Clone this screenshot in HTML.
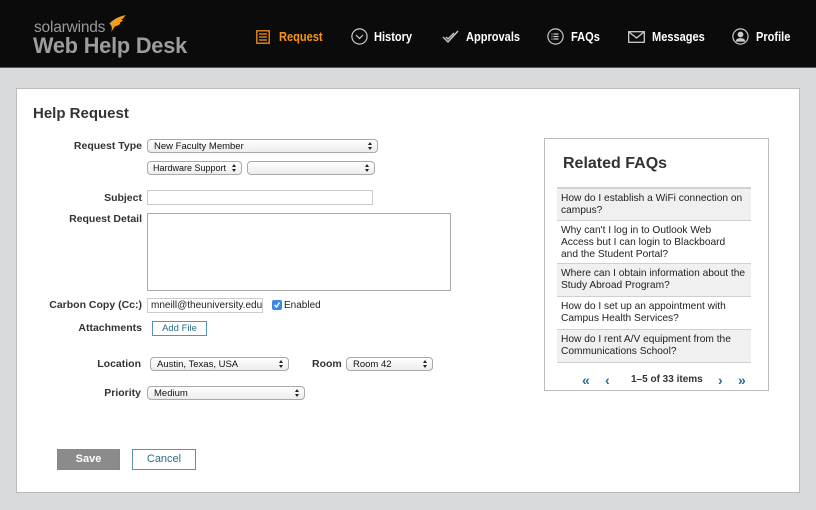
<!DOCTYPE html>
<html><head><meta charset="utf-8">
<style>
*{margin:0;padding:0;box-sizing:border-box}
body{width:816px;height:510px;background:#d9dadc;font-family:"Liberation Sans",sans-serif;position:relative;overflow:hidden;color:#222}
.hdr{position:absolute;left:0;top:0;width:816px;height:68px;background:#0b0b0b;border-bottom:1px solid #555}
.a{position:absolute;white-space:nowrap}
.nav{position:absolute;top:29px;font-size:13px;font-weight:bold;color:#fff;line-height:16px;transform:scaleX(0.85);transform-origin:left}
.panel{position:absolute;left:16px;top:88px;width:784px;height:405px;background:#fff;border:1px solid #bbb}
.lbl{position:absolute;font-size:10.5px;font-weight:bold;color:#333;text-align:right;line-height:14px}
.sel{position:absolute;height:14px;border:1px solid #a9a9a9;border-radius:4px;background:linear-gradient(#fff,#ececec);font-size:9.5px;line-height:13px;padding-left:6px;color:#111;overflow:hidden}
.sel:after{content:"";position:absolute;right:5px;top:2px;width:0;height:0;border-left:2.5px solid transparent;border-right:2.5px solid transparent;border-bottom:3px solid #222}
.sel:before{content:"";position:absolute;right:5px;top:7px;width:0;height:0;border-left:2.5px solid transparent;border-right:2.5px solid transparent;border-top:3px solid #222}
.inp{position:absolute;border:1px solid #ccc;background:#fff;font-size:10px;line-height:13px;padding-left:3px}
.faq{position:absolute;left:557px;width:194px;font-size:10.2px;line-height:12px;color:#222;padding:4px 4px 0 4px;border-top:1px solid #d0d0d0}
</style></head><body>
<div class="hdr">
 <div class="a" style="left:34px;top:19px;font-size:15.5px;color:#999;letter-spacing:-0.2px">solarwinds</div>
 <svg class="a" style="left:102px;top:14px" width="26" height="19" viewBox="0 0 28 20"><path d="M8 10 C14 4 20 2 26 1 C22 4 24 5 20 6 C24 6 22 8 19 9 C21 10 18 12 14 13 L10 19 C11 15 11 13 8 10Z" fill="#f49d1c"/></svg>
 <div class="a" style="left:33px;top:33px;font-size:22.5px;color:#9d9d9d;font-weight:bold;letter-spacing:-0.2px;transform:scaleX(0.965);transform-origin:left">Web Help Desk</div>

 <svg class="a" style="left:256px;top:30px" width="14" height="14" viewBox="0 0 14 14" fill="none" stroke="#f7941d" stroke-width="1.3"><rect x="0.8" y="0.8" width="12.4" height="12.4"/><path d="M3 4h8M3 7h8M3 10h8"/></svg>
 <div class="nav" style="left:279px;color:#f7941d">Request</div>
 <svg class="a" style="left:351px;top:28px" width="17" height="17" viewBox="0 0 17 17" fill="none" stroke="#ccc" stroke-width="1.2"><circle cx="8.5" cy="8.5" r="7.6"/><path d="M5 7l3.5 3.5L12 7"/></svg>
 <div class="nav" style="left:374px">History</div>
 <svg class="a" style="left:442px;top:30px" width="17" height="14" viewBox="0 0 17 14" fill="none" stroke="#ccc" stroke-width="1.4"><path d="M1 7l5 5L16 1"/><path d="M4 7l2 2 6-6"/></svg>
 <div class="nav" style="left:466px">Approvals</div>
 <svg class="a" style="left:547px;top:28px" width="17" height="17" viewBox="0 0 17 17" fill="none" stroke="#ccc" stroke-width="1.2"><circle cx="8.5" cy="8.5" r="7.6"/><path d="M6.5 6h5M6.5 8.5h5M6.5 11h5M4.5 6h1M4.5 8.5h1M4.5 11h1"/></svg>
 <div class="nav" style="left:571px">FAQs</div>
 <svg class="a" style="left:628px;top:31px" width="17" height="12" viewBox="0 0 17 12" fill="none" stroke="#ccc" stroke-width="1.3"><rect x="0.7" y="0.7" width="15.6" height="10.6"/><path d="M1 1l7.5 6L16 1"/></svg>
 <div class="nav" style="left:652px">Messages</div>
 <svg class="a" style="left:732px;top:28px" width="17" height="17" viewBox="0 0 17 17" fill="none" stroke="#ccc" stroke-width="1.2"><circle cx="8.5" cy="8.5" r="7.6"/><circle cx="8.5" cy="6.5" r="2.3" fill="#ccc"/><path d="M4.5 13c0-3 8-3 8 0z" fill="#ccc"/></svg>
 <div class="nav" style="left:756px">Profile</div>
</div>

<div class="panel"></div>
<div class="a" style="left:33px;top:105px;font-size:15px;font-weight:bold;color:#333">Help Request</div>

<div class="lbl" style="right:674px;top:139px">Request Type</div>
<div class="sel" style="left:147px;top:139px;width:231px">New Faculty Member</div>
<div class="sel" style="left:147px;top:161px;width:95px;padding-left:5px;font-size:9px">Hardware Support</div>
<div class="sel" style="left:247px;top:161px;width:128px"></div>

<div class="lbl" style="right:674px;top:191px">Subject</div>
<div class="inp" style="left:147px;top:190px;width:226px;height:15px"></div>
<div class="lbl" style="right:674px;top:212px">Request Detail</div>
<div class="inp" style="left:147px;top:213px;width:304px;height:78px;border-color:#aaa"></div>

<div class="lbl" style="right:674px;top:298px">Carbon Copy (Cc:)</div>
<div class="inp" style="left:147px;top:298px;width:116px;height:15px;overflow:hidden">mneill@theuniversity.edu</div>
<div class="a" style="left:272px;top:300px;width:10px;height:10px;background:#3b88e8;border-radius:2px"><svg width="10" height="10" viewBox="0 0 10 10" style="display:block"><path d="M2.5 5l2 2 3-4.5" stroke="#fff" stroke-width="1.5" fill="none"/></svg></div>
<div class="a" style="left:284px;top:300px;font-size:10px;color:#222">Enabled</div>

<div class="lbl" style="right:674px;top:321px">Attachments</div>
<div class="a" style="left:152px;top:321px;width:55px;height:15px;border:1px solid #5a94aa;font-size:9.5px;line-height:13px;text-align:center;color:#2a6d8b">Add File</div>

<div class="lbl" style="right:675px;top:357px">Location</div>
<div class="sel" style="left:150px;top:357px;width:139px">Austin, Texas, USA</div>
<div class="lbl" style="left:312px;top:357px">Room</div>
<div class="sel" style="left:346px;top:357px;width:87px">Room 42</div>

<div class="lbl" style="right:675px;top:386px">Priority</div>
<div class="sel" style="left:147px;top:386px;width:158px">Medium</div>

<div class="a" style="left:57px;top:449px;width:63px;height:21px;background:#8b8b8b;border:1px solid #6f8f9a;color:#fff;font-size:11px;font-weight:bold;line-height:19px;text-align:center">Save</div>
<div class="a" style="left:132px;top:449px;width:64px;height:21px;background:#fff;border:1px solid #5a94aa;color:#2a6d8b;font-size:11px;line-height:19px;text-align:center">Cancel</div>

<div class="a" style="left:544px;top:138px;width:225px;height:253px;border:1px solid #bbb;background:#fff"></div>
<div class="a" style="left:563px;top:155px;font-size:16px;font-weight:bold;color:#333">Related FAQs</div>
<div class="faq" style="top:187px;height:33px;background:#f0f0f0;border-top:2px solid #d0d0d0">How do I establish a WiFi connection on campus?</div>
<div class="faq" style="top:220px;height:43px">Why can't I log in to Outlook Web<br>Access but I can login to Blackboard<br>and the Student Portal?</div>
<div class="faq" style="top:263px;height:33px;background:#f0f0f0">Where can I obtain information about the Study Abroad Program?</div>
<div class="faq" style="top:296px;height:33px">How do I set up an appointment with Campus Health Services?</div>
<div class="faq" style="top:329px;height:34px;background:#f0f0f0;border-bottom:1px solid #d0d0d0">How do I rent A/V equipment from the Communications School?</div>
<div class="a" style="left:582px;top:372px;font-size:14px;color:#2a6d8b;font-weight:bold">«</div>
<div class="a" style="left:605px;top:372px;font-size:14px;color:#2a6d8b;font-weight:bold">‹</div>
<div class="a" style="left:631px;top:374px;font-size:10px;font-weight:bold;color:#333">1–5 of 33 items</div>
<div class="a" style="left:718px;top:372px;font-size:14px;color:#2a6d8b;font-weight:bold">›</div>
<div class="a" style="left:738px;top:372px;font-size:14px;color:#2a6d8b;font-weight:bold">»</div>
</body></html>
